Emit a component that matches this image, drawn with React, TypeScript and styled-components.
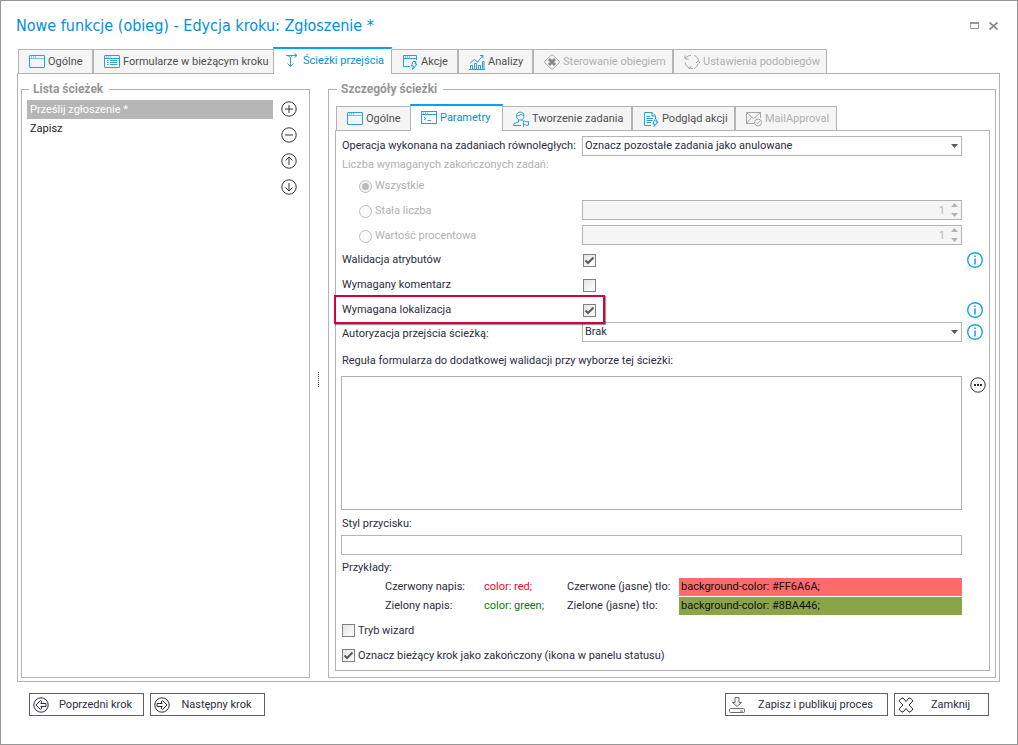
import React, { useState } from "react";
import styled, { createGlobalStyle, css } from "styled-components";

const line = "#b4b4b4";
const blue = "#0090dc";
const bright = "#00a2f5";
const icon = "#2a9fd8";

const GlobalStyle = createGlobalStyle`
  * { box-sizing: border-box; }
  body {
    margin: 0;
    background: #fff;
    color: #2c2c3c;
    font: 11px/14px Roboto, Tahoma, "DejaVu Sans", sans-serif;
  }
  button, input, select, textarea { font: inherit; color: inherit; }
  svg { flex-shrink: 0; }
`;

const Window = styled.main`
  display: flex;
  flex-direction: column;
  min-height: 100vh;
  padding: 0 17px 28px 16px;
  border: 1px solid #969696;
`;

const TitleBar = styled.header`
  display: flex;
  align-items: center;
  justify-content: space-between;
  height: 46px;
  padding: 4px 1px 0 0;
`;

const Title = styled.h1`
  margin: 0 0 0 -1px;
  color: ${blue};
  font-family: "DejaVu Sans Condensed", Tahoma, sans-serif;
  font-size: 16px;
  line-height: 20px;
  font-weight: 400;
`;

const WindowButtons = styled.div`
  display: flex;
  gap: 8px;
`;

const IconButton = styled.button`
  display: flex;
  padding: 0;
  border: 0;
  background: none;
  color: #333;
  cursor: pointer;
`;

const TabBar = styled.div`
  display: flex;
  align-items: flex-end;
  height: 26px;
  padding-left: 1px;
`;

const Tab = styled.button<{ $w: number; $active?: boolean }>`
  display: flex;
  align-items: center;
  gap: 3px;
  min-width: ${(p) => p.$w}px;
  height: 24px;
  padding: 0 0 0 10px;
  border: 1px solid ${line};
  border-bottom: 0;
  background: #f5f5f5;
  color: #505050;
  white-space: nowrap;
  &:disabled { color: #b0b0b0; }
  ${(p) =>
    p.$active &&
    css`
      position: relative;
      height: 27px;
      margin: 0 -1px -1px;
      padding-bottom: 2px;
      border-top: 2px solid ${bright};
      background: #fff;
      color: ${blue};
    `}
`;

const TabPage = styled.section`
  display: flex;
  flex: 1;
  flex-direction: column;
  border: 1px solid ${line};
`;

const Columns = styled.div`
  display: flex;
  flex: 1;
  padding: 7px 3px 3px;
`;

const Group = styled.fieldset<{ $grow?: boolean }>`
  display: flex;
  flex: ${(p) => (p.$grow ? "1" : "0 0 289px")};
  flex-direction: ${(p) => (p.$grow ? "column" : "row")};
  min-width: 0;
  margin: 0;
  padding: ${(p) => (p.$grow ? "7px 5px 6px 6px" : "3px 12px 6px 5px")};
  border: 1px solid ${line};
`;

const Legend = styled.legend`
  margin-left: 2px;
  padding: 0 6px 0 4px;
  color: #969696;
  font-size: 12px;
  line-height: 16px;
  font-weight: 700;
`;

const PathList = styled.ul`
  flex: 1;
  margin: 0;
  padding: 0;
  list-style: none;
`;

const PathItem = styled.li<{ $selected?: boolean }>`
  padding: 3px 3px 2px;
  background: ${(p) => (p.$selected ? "#b6b6b6" : "none")};
  color: ${(p) => (p.$selected ? "#fff" : "#1c1c28")};
`;

const ListTools = styled.div`
  display: flex;
  flex-direction: column;
  gap: 10px;
  padding: 1px 0 0 8px;
`;

const Splitter = styled.div`
  display: flex;
  flex: 0 0 18px;
  align-items: center;
  justify-content: center;
`;

const Form = styled.form`
  display: flex;
  flex: 1;
  flex-direction: column;
  padding: 5px 6px 2px 5px;
`;

const Row = styled.div<{ $muted?: boolean }>`
  position: relative;
  display: grid;
  grid-template-columns: 241px 1fr 21px;
  align-items: center;
  padding: 3px 0 2px;
  color: ${(p) => (p.$muted ? "#b0b0b0" : "inherit")};
`;

const SelectRow = styled(Row)`
  padding: 0;
`;

const Caption = styled.label`
  padding-left: 1px;
  white-space: nowrap;
`;

const LowCaption = styled(Caption)`
  padding-top: 4px;
`;

const SubCaption = styled.div`
  padding: 2px 0 0 1px;
  color: #b0b0b0;
`;

const RadioLabel = styled.label`
  display: flex;
  align-items: center;
  gap: 3px;
  height: 20px;
  padding: 2px 0 0 18px;
`;

const Radio = styled.input`
  width: 13px;
  height: 13px;
  margin: 0;
  border: 1px solid #bcbcbc;
  border-radius: 50%;
  appearance: none;
  background: #fafafa;
  &:checked {
    background: radial-gradient(circle, #bcbcbc 0 3px, #f4f4f4 4px);
  }
`;

const Field = styled.div`
  position: relative;
  display: flex;
  height: 20px;
  align-items: center;
`;

const control = css`
  width: 100%;
  margin: 0;
  border: 1px solid ${line};
  border-radius: 0;
  background: #fff;
  outline: 0;
`;

const Select = styled.select`
  ${control}
  height: 20px;
  padding: 0 20px 0 2px;
  appearance: none;
`;

const TextInput = styled.input`
  ${control}
  height: 20px;
  padding: 0 3px;
`;

const NumberInput = styled(TextInput)`
  padding-right: 16px;
  background: #f5f5f5;
  color: #b8b8b8;
  text-align: right;
  appearance: textfield;
  &::-webkit-inner-spin-button { display: none; }
`;

const FieldMark = styled.svg`
  position: absolute;
  right: 3px;
  top: 2px;
  pointer-events: none;
`;

const TextArea = styled.textarea`
  ${control}
  display: block;
  min-height: 80px;
  border-color: #adadb8;
  resize: none;
`;

const WideRow = styled.div<{ $grow?: boolean }>`
  display: grid;
  flex: ${(p) => (p.$grow ? "1" : "none")};
  grid-template-columns: 1fr 21px;
`;

const MoreButton = styled(IconButton)`
  align-self: start;
  padding: 1px 0 0 8px;
`;

const InfoButton = styled(IconButton)`
  justify-self: end;
`;

const CheckBox = styled.span`
  position: relative;
  display: inline-flex;
  width: 13px;
  height: 13px;
`;

const CheckInput = styled.input`
  width: 13px;
  height: 13px;
  margin: 0;
  border: 1px solid #808080;
  appearance: none;
  background: linear-gradient(135deg, #e4e4e4, #fff);
  & + svg { display: none; }
  &:checked + svg { display: block; }
`;

const CheckMark = styled.svg`
  position: absolute;
  inset: 0;
  pointer-events: none;
`;

const CheckCell = styled.div`
  display: flex;
  align-items: center;
  height: 20px;
  padding-left: 1px;
`;

const CheckRow = styled.div`
  display: flex;
  align-items: center;
  gap: 3px;
  height: 25px;
  padding-left: 1px;
`;

const CheckRows = styled.div`
  padding-top: 3px;
`;

const Highlight = styled.div`
  position: absolute;
  top: -2px;
  bottom: -2px;
  left: -7px;
  width: 271px;
  border: 2px solid #d6003a;
  box-shadow: 1px 1px 1px rgba(0, 0, 0, 0.4);
  pointer-events: none;
  z-index: 1;
`;

const BlockCaption = styled(Caption)<{ $h: number }>`
  display: flex;
  align-items: center;
  height: ${(p) => p.$h}px;
  padding-top: 2px;
`;

const RuleCaption = styled(BlockCaption)`
  padding-top: 4px;
`;

const Examples = styled.div`
  display: grid;
  grid-template-columns: 99px 83px 112px 1fr;
  row-gap: 1px;
  margin: 0 21px 0 44px;
  line-height: 18px;
  white-space: nowrap;
`;

const Sample = styled.span<{ $fg?: string; $bg?: string }>`
  padding-left: ${(p) => (p.$bg ? "2px" : "0")};
  color: ${(p) => p.$fg || "#101010"};
  background: ${(p) => p.$bg || "none"};
`;

const Footer = styled.footer`
  display: flex;
  gap: 6px;
  padding: 11px 11px 0 12px;
`;

const Spacer = styled.div`
  flex: 1;
`;

const ActionButton = styled.button<{ $w: number }>`
  display: grid;
  grid-template-columns: 18px 1fr;
  align-items: center;
  min-width: ${(p) => p.$w}px;
  height: 23px;
  padding: 0 3px;
  border: 1px solid #5f5f64;
  background: #fff;
  white-space: nowrap;
`;

type IconProps = { name: string; color?: string };

const shapes: Record<string, React.ReactNode> = {
  window: (
    <>
      <rect x="0.5" y="1.5" width="15" height="12" rx="0.5" />
      <path d="M0.5 4.5H15.5" strokeOpacity="0.6" />
      <path d="M2 3H3M4 3H5M6 3H7" />
    </>
  ),
  form: (
    <>
      <rect x="0.5" y="1.5" width="15" height="12" rx="0.5" />
      <path d="M0.5 4.5H15.5M2 3H3M4 3H5M6 3H7M3 6.5H4.5M6 6.5H13M3 8.5H4.5M6 8.5H13M3 10.5H4.5M6 10.5H13" />
    </>
  ),
  paths: (
    <path d="M2 2.5H13M10.5 0.5L13 2.5L10.5 4.5M2 2.5C5 2.5 6.5 3.5 6.5 6V13M3.5 10.5L6.5 13.5L9.5 10.5M6.5 6C6.5 4 7.5 2.5 9.5 2.5" />
  ),
  actions: (
    <>
      <path d="M8 12.5H1.5V1.5H14.5V6M1.5 4.5H14.5M3 3H4M5 3H6M7 3H8" />
      <path d="M11 7.5H14L13 10H15L10.5 15.5L11.5 12H9.5Z" />
    </>
  ),
  chart: (
    <path d="M0 15.5H16M1.5 15V11.5H3.5V15M5.5 15V9.5H7.5V15M9.5 15V11.5H11.5V15M13.5 15V7.5H15V15M1 9L5.5 5.5L8.5 8L14 1.5M11 1.5H14V4.5" />
  ),
  control: (
    <>
      <path d="M8 0.8Q9 0.8 15 7.2Q15.6 8 15 8.8Q9 15.2 8 15.2Q7 15.2 1 8.8Q0.4 8 1 7.2Q7 0.8 8 0.8Z" />
      <path strokeWidth="3" stroke="#888" d="M5 5L11 11M11 5L5 11" />
    </>
  ),
  cycle: (
    <path d="M1 1.5V5H4.5M1.3 4.8C3 2 5 1.3 7 1.5M10 1.5C12.5 2 14 4 14.5 6.5M12 9L14.5 6.5L16 9.5M14 9.5C13.5 12 12 13.5 10 14.5M7.5 12L5 14.5H9M5.5 14C3 13 1.5 11 1.2 8.5" />
  ),
  params: (
    <>
      <rect x="0.5" y="1.5" width="15" height="12" />
      <path d="M0.5 4.5H15.5M2 3H3M4 3H5M6 3H7M3 7L5 8.5L3 10M6.5 10.5H10" />
    </>
  ),
  person: (
    <>
      <path d="M3.5 4.5C3.5 0 11 0 11 4.5C11 8 9.5 9 7.2 9C5 9 3.5 8 3.5 4.5M3.5 5C6 5 7 4 8 3C9 4 10 4.5 11 5M5.5 9V11L1 12.5L0.5 14.5H8M9 9V10" />
      <path d="M10.5 16V9.5M10.5 10.5C12 9 13 12 15.5 10.5V14C13 15.5 12.5 12.5 10.5 14" />
    </>
  ),
  preview: (
    <>
      <path d="M8 14.5H1.5V1.5H9L12.5 5V8M9 1.5V5H12.5M3.5 5.5H7M3.5 7.5H10M3.5 9.5H9.5M3.5 11.5H8" />
      <path d="M11.5 9H14L13 11H15L11 15.5L12 13H10Z" />
    </>
  ),
  mail: (
    <>
      <path d="M8 12.5H0.5V1.5H14.5V7M0.5 1.5L7.5 7.5L14.5 1.5M0.5 12.5L5.5 6.5" />
      <circle cx="12" cy="11.5" r="3.5" />
      <path d="M10.3 11.5L11.6 12.8L13.8 10.2" />
    </>
  ),
  plus: (
    <>
      <circle cx="8" cy="8" r="7.2" />
      <path d="M8 4V12M4 8H12" />
    </>
  ),
  minus: (
    <>
      <circle cx="8" cy="8" r="7.2" />
      <path d="M4 8H12" />
    </>
  ),
  up: (
    <>
      <circle cx="8" cy="8" r="7.2" />
      <path d="M8 12V4M4.5 7.5L8 4L11.5 7.5" />
    </>
  ),
  down: (
    <>
      <circle cx="8" cy="8" r="7.2" />
      <path d="M8 4V12M4.5 8.5L8 12L11.5 8.5" />
    </>
  ),
  more: (
    <>
      <circle cx="8" cy="8" r="7.2" />
      <path strokeWidth="2" d="M4 8H6M7 8H9M10 8H12" />
    </>
  ),
  info: (
    <>
      <circle cx="8" cy="8" r="7.3" strokeWidth="1.4" />
      <path strokeWidth="1.6" d="M8 3.5V5M8 6.5V12.5" />
    </>
  ),
  previous: (
    <>
      <circle cx="8" cy="8" r="7.2" />
      <path d="M3 8L7.5 3.5L9 5L7.8 6.5H13V9.5H7.8L9 11L7.5 12.5Z" />
    </>
  ),
  next: (
    <>
      <circle cx="8" cy="8" r="7.2" />
      <path d="M13 8L8.5 3.5L7 5L8.2 6.5H3V9.5H8.2L7 11L8.5 12.5Z" />
    </>
  ),
  publish: (
    <>
      <path fill="#f0f0f0" d="M6 0.5H10V5.5H12.5L8 9.5L3.5 5.5H6Z" />
      <rect x="0.5" y="11.5" width="15" height="4" rx="1" />
      <path d="M11 14H14" />
    </>
  ),
  cross: (
    <path
      strokeLinejoin="round"
      d="M4 1Q5 0.600 6 2L8 4.500L10 2Q11 0.600 12 1L14.500 3Q15.300 4 14 5L11 8L14 11Q15.300 12 14.500 13L12 15Q11 15.400 10 14L8 11.500L6 14Q5 15.400 4 15L1.500 13Q0.700 12 2 11L5 8L2 5Q0.700 4 1.500 3Z"
    />
  ),
};

const Icon = ({ name, color = "currentColor" }: IconProps) => (
  <svg width="16" height="16" viewBox="0 0 16 16" fill="none" stroke={color} strokeWidth="1" aria-hidden="true">
    {shapes[name]}
  </svg>
);

const Arrow = () => (
  <FieldMark width="9" height="16" viewBox="0 0 9 16" fill="#5a5a5a">
    <path d="M1 6H8L4.500 10Z" />
  </FieldMark>
);

const SpinArrows = () => (
  <FieldMark width="9" height="16" viewBox="0 0 9 16" fill="#b4b4b4">
    <path d="M1 5H8L4.500 1ZM1 11H8L4.500 15Z" />
  </FieldMark>
);

type CheckProps = { id: string; initial?: boolean };

const Check = ({ id, initial = false }: CheckProps) => {
  const [on, setOn] = useState(initial);
  return (
    <CheckBox>
      <CheckInput id={id} type="checkbox" checked={on} onChange={() => setOn(!on)} />
      <CheckMark width="13" height="13" viewBox="0 0 13 13" fill="none" stroke="#5c5c5c" strokeWidth="2">
        <path d="M2.500 6.500L5 9L10.500 3.500" />
      </CheckMark>
    </CheckBox>
  );
};

const Info = () => (
  <InfoButton type="button" aria-label="Informacja">
    <Icon name="info" color="#16a4e6" />
  </InfoButton>
);

type TabDef = { label: string; icon: string; width: number; active?: boolean; disabled?: boolean };

const mainTabs: TabDef[] = [
  { label: "Ogólne", icon: "window", width: 75 },
  { label: "Formularze w bieżącym kroku", icon: "form", width: 181 },
  { label: "Ścieżki przejścia", icon: "paths", width: 119, active: true },
  { label: "Akcje", icon: "actions", width: 67 },
  { label: "Analizy", icon: "chart", width: 75 },
  { label: "Sterowanie obiegiem", icon: "control", width: 140, disabled: true },
  { label: "Ustawienia podobiegów", icon: "cycle", width: 154, disabled: true },
];

const pathTabs: TabDef[] = [
  { label: "Ogólne", icon: "window", width: 75 },
  { label: "Parametry", icon: "params", width: 93, active: true },
  { label: "Tworzenie zadania", icon: "person", width: 130 },
  { label: "Podgląd akcji", icon: "preview", width: 103 },
  { label: "MailApproval", icon: "mail", width: 102, disabled: true },
];

const Tabs = ({ items }: { items: TabDef[] }) => (
  <TabBar role="tablist">
    {items.map((t) => (
      <Tab
        key={t.label}
        type="button"
        role="tab"
        aria-selected={!!t.active}
        $w={t.width}
        $active={t.active}
        disabled={t.disabled}
      >
        <Icon name={t.icon} color={t.disabled ? "#a4a4a4" : icon} />
        {t.label}
      </Tab>
    ))}
  </TabBar>
);

const PathForm = () => (
  <Form>
    <SelectRow>
      <Caption htmlFor="operation">Operacja wykonana na zadaniach równoległych:</Caption>
      <Field>
        <Select id="operation">
          <option>Oznacz pozostałe zadania jako anulowane</option>
        </Select>
        <Arrow />
      </Field>
    </SelectRow>
    <SubCaption>Liczba wymaganych zakończonych zadań:</SubCaption>
    <Row $muted>
      <RadioLabel>
        <Radio type="radio" name="count" defaultChecked disabled />
        Wszystkie
      </RadioLabel>
    </Row>
    <Row $muted>
      <RadioLabel>
        <Radio type="radio" name="count" disabled />
        Stała liczba
      </RadioLabel>
      <Field>
        <NumberInput type="number" defaultValue={1} aria-label="Stała liczba" disabled />
        <SpinArrows />
      </Field>
    </Row>
    <Row $muted>
      <RadioLabel>
        <Radio type="radio" name="count" disabled />
        Wartość procentowa
      </RadioLabel>
      <Field>
        <NumberInput type="number" defaultValue={1} aria-label="Wartość procentowa" disabled />
        <SpinArrows />
      </Field>
    </Row>
    <Row>
      <Caption htmlFor="attributes">Walidacja atrybutów</Caption>
      <CheckCell>
        <Check id="attributes" initial />
      </CheckCell>
      <Info />
    </Row>
    <Row>
      <Caption htmlFor="comment">Wymagany komentarz</Caption>
      <CheckCell>
        <Check id="comment" />
      </CheckCell>
    </Row>
    <Row>
      <Caption htmlFor="location">Wymagana lokalizacja</Caption>
      <CheckCell>
        <Check id="location" initial />
      </CheckCell>
      <Info />
      <Highlight />
    </Row>
    <SelectRow>
      <LowCaption htmlFor="authorization">Autoryzacja przejścia ścieżką:</LowCaption>
      <Field>
        <Select id="authorization">
          <option>Brak</option>
        </Select>
        <Arrow />
      </Field>
      <Info />
    </SelectRow>
    <RuleCaption htmlFor="rule" $h={34}>
      Reguła formularza do dodatkowej walidacji przy wyborze tej ścieżki:
    </RuleCaption>
    <WideRow $grow>
      <TextArea id="rule" />
      <MoreButton type="button" aria-label="Edytuj regułę">
        <Icon name="more" />
      </MoreButton>
    </WideRow>
    <BlockCaption htmlFor="style" $h={25}>
      Styl przycisku:
    </BlockCaption>
    <WideRow>
      <TextInput id="style" />
    </WideRow>
    <BlockCaption as="div" $h={23}>
      Przykłady:
    </BlockCaption>
    <Examples>
      <span>Czerwony napis:</span>
      <Sample $fg="#f5002c">color: red;</Sample>
      <span>Czerwone (jasne) tło:</span>
      <Sample $bg="#ff6a6a">background-color: #FF6A6A;</Sample>
      <span>Zielony napis:</span>
      <Sample $fg="#008000">color: green;</Sample>
      <span>Zielone (jasne) tło:</span>
      <Sample $bg="#8ba446">background-color: #8BA446;</Sample>
    </Examples>
    <CheckRows>
      <CheckRow>
        <Check id="wizard" />
        <label htmlFor="wizard">Tryb wizard</label>
      </CheckRow>
      <CheckRow>
        <Check id="finished" initial />
        <label htmlFor="finished">Oznacz bieżący krok jako zakończony (ikona w panelu statusu)</label>
      </CheckRow>
    </CheckRows>
  </Form>
);

export default function App() {
  return (
    <>
      <GlobalStyle />
      <Window>
        <TitleBar>
          <Title>Nowe funkcje (obieg) - Edycja kroku: Zgłoszenie *</Title>
          <WindowButtons>
            <IconButton type="button" aria-label="Maksymalizuj">
              <svg width="11" height="9" viewBox="0 0 11 9" fill="none" stroke="#969696">
                <path d="M1.500 1V6.500H9.500V1" />
                <path d="M1 1H10" strokeWidth="2" />
              </svg>
            </IconButton>
            <IconButton type="button" aria-label="Zamknij okno">
              <svg width="11" height="9" viewBox="0 0 11 9" fill="none" stroke="#8c8c8c" strokeWidth="1.700">
                <path d="M1.500 0.500L9.500 7.500M9.500 0.500L1.500 7.500" />
              </svg>
            </IconButton>
          </WindowButtons>
        </TitleBar>
        <Tabs items={mainTabs} />
        <TabPage>
          <Columns>
            <Group>
              <Legend>Lista ścieżek</Legend>
              <PathList>
                <PathItem $selected>Prześlij zgłoszenie *</PathItem>
                <PathItem>Zapisz</PathItem>
              </PathList>
              <ListTools>
                <IconButton type="button" aria-label="Dodaj"><Icon name="plus" /></IconButton>
                <IconButton type="button" aria-label="Usuń"><Icon name="minus" /></IconButton>
                <IconButton type="button" aria-label="W górę"><Icon name="up" /></IconButton>
                <IconButton type="button" aria-label="W dół"><Icon name="down" /></IconButton>
              </ListTools>
            </Group>
            <Splitter>
              <svg width="3" height="16" viewBox="0 0 3 16" fill="none" stroke="#555">
                <path strokeDasharray="1 1" d="M0.500 0V16" />
              </svg>
            </Splitter>
            <Group $grow>
              <Legend>Szczegóły ścieżki</Legend>
              <Tabs items={pathTabs} />
              <TabPage>
                <PathForm />
              </TabPage>
            </Group>
          </Columns>
        </TabPage>
        <Footer>
          <ActionButton type="button" $w={115}><Icon name="previous" />Poprzedni krok</ActionButton>
          <ActionButton type="button" $w={115}><Icon name="next" />Następny krok</ActionButton>
          <Spacer />
          <ActionButton type="button" $w={163}><Icon name="publish" color="#6c6c6c" />Zapisz i publikuj proces</ActionButton>
          <ActionButton type="button" $w={95}><Icon name="cross" />Zamknij</ActionButton>
        </Footer>
      </Window>
    </>
  );
}
